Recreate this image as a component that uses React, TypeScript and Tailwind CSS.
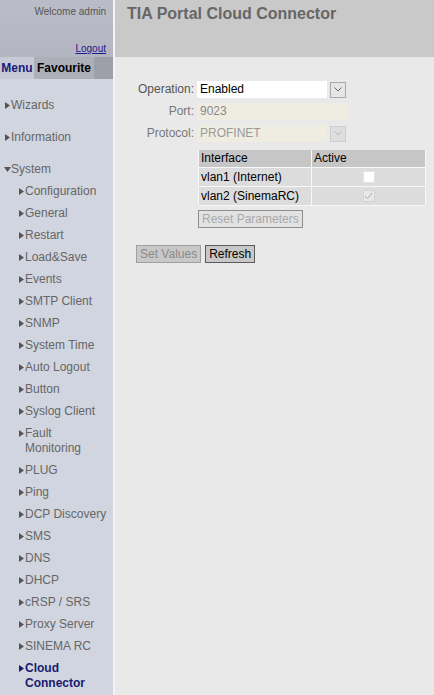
import React from "react";

const Tri = ({ down = false }: { down?: boolean }) => (
  <svg width="5" height="7" viewBox="0 0 5 7" className="inline-block mr-[1px] shrink-0" style={{ transform: down ? "rotate(90deg)" : undefined }}>
    <path d="M0 0 L5 3.5 L0 7 Z" fill="#555" />
  </svg>
);

const subItems: (string | [string, string])[] = [
  "Configuration",
  "General",
  "Restart",
  "Load&Save",
  "Events",
  "SMTP Client",
  "SNMP",
  "System Time",
  "Auto Logout",
  "Button",
  "Syslog Client",
  ["Fault", "Monitoring"],
  "PLUG",
  "Ping",
  "DCP Discovery",
  "SMS",
  "DNS",
  "DHCP",
  "cRSP / SRS",
  "Proxy Server",
  "SINEMA RC",
];

export default function App() {
  return (
    <div
      className="flex w-[434px] h-[695px] overflow-hidden text-[12px] leading-[15px]"
      style={{ fontFamily: '"Liberation Sans", Arial, sans-serif' }}
    >
      {/* Sidebar */}
      <div className="w-[113px] shrink-0 flex flex-col bg-[#d1d5df]">
        <div className="h-[57px] bg-gradient-to-b from-[#babdc7] to-[#b3b6c1] flex flex-col items-end pr-[7px] pt-[6px] text-[10px] leading-[12px] text-[#555]">
          <div>Welcome admin</div>
          <div className="mt-auto mb-[2px] text-[#1a1a8c] underline">Logout</div>
        </div>
        <div className="h-[22px] bg-[#9da0a9] flex text-[12px] font-bold">
          <div className="w-[34px] bg-[#c7cad4] text-[#1a1a7a] flex items-center justify-center">Menu</div>
          <div className="w-[60px] bg-[#adb0b8] text-black flex items-center justify-center">Favourite</div>
        </div>
        <div className="flex flex-col text-[#666] pt-[19px]">
          <div className="flex items-center pl-[5px] h-[15px]"><Tri />Wizards</div>
          <div className="flex items-center pl-[5px] h-[15px] mt-[17px]"><Tri />Information</div>
          <div className="flex items-center pl-[5px] h-[15px] mt-[17px]"><Tri down />System</div>
          {subItems.map((it, i) => (
            <div key={i} className="flex items-start pl-[19px] mt-[7px]">
              <span className="mt-[4px] mr-[1px]"><svg width="5" height="7" viewBox="0 0 5 7"><path d="M0 0 L5 3.5 L0 7 Z" fill="#555" /></svg></span>
              {Array.isArray(it) ? (
                <div className="flex flex-col">
                  <span>{it[0]}</span>
                  <span>{it[1]}</span>
                </div>
              ) : (
                <span className="whitespace-nowrap">{it}</span>
              )}
            </div>
          ))}
          <div className="flex items-start pl-[19px] mt-[7px] font-bold text-[#1a1a6e]">
            <span className="mt-[4px] mr-[1px]"><svg width="5" height="7" viewBox="0 0 5 7"><path d="M0 0 L5 3.5 L0 7 Z" fill="#1a1a6e" /></svg></span>
            <div className="flex flex-col">
              <span>Cloud</span>
              <span>Connector</span>
            </div>
          </div>
        </div>
      </div>
      <div className="w-[2px] shrink-0 bg-[#f4f4f4]" />
      {/* Content */}
      <div className="flex-1 flex flex-col bg-[#e9e9e9]">
        <div className="h-[57px] bg-[#c9c9c9] pl-[12px] pt-[5px] text-[16px] leading-[18px] font-bold text-[#666]">
          TIA Portal Cloud Connector
        </div>
        <div className="pl-[21px] pt-[24px]">
          <div className="flex items-center h-[17px]">
            <div className="w-[60px] text-right text-[#555] pr-[2px]">Operation:</div>
            <div className="ml-[1px] w-[130px] h-[17px] bg-white text-black pl-[3px] flex items-center">Enabled</div>
            <div className="ml-[3px] w-[16px] h-[16px] bg-[#e6e6e6] border border-[#a9a9a9] flex items-center justify-center">
              <svg width="8" height="5" viewBox="0 0 8 5"><path d="M0.5 0.5 L4 4 L7.5 0.5" stroke="#666" fill="none" strokeWidth="1" /></svg>
            </div>
          </div>
          <div className="flex items-center h-[17px] mt-[5px]">
            <div className="w-[60px] text-right text-[#777] pr-[2px]">Port:</div>
            <div className="ml-[1px] w-[151px] h-[17px] bg-[#efede2] text-[#888] pl-[3px] flex items-center">9023</div>
          </div>
          <div className="flex items-center h-[17px] mt-[5px]">
            <div className="w-[60px] text-right text-[#777] pr-[2px]">Protocol:</div>
            <div className="ml-[1px] w-[130px] h-[17px] bg-[#efede2] text-[#999] pl-[3px] flex items-center">PROFINET</div>
            <div className="ml-[3px] w-[16px] h-[16px] bg-[#dedede] border border-[#cfcfcf] flex items-center justify-center">
              <svg width="8" height="5" viewBox="0 0 8 5"><path d="M0.5 0.5 L4 4 L7.5 0.5" stroke="#b8b8b8" fill="none" strokeWidth="1" /></svg>
            </div>
          </div>
          <div className="ml-[62px] mt-[8px] w-[228px]">
            <div className="grid grid-cols-[112px_1fr] gap-[1px] bg-[#f7f7f7] p-[1px] pt-0">
              <div className="bg-[#c6c6c6] text-black pl-[2px] h-[17px] flex items-center">Interface</div>
              <div className="bg-[#c6c6c6] text-black pl-[2px] h-[17px] flex items-center">Active</div>
              <div className="bg-[#dcdcdc] text-black pl-[2px] h-[18px] flex items-center">vlan1 (Internet)</div>
              <div className="bg-[#dcdcdc] h-[18px] flex items-center justify-center">
                <div className="w-[12px] h-[12px] bg-white border border-[#e4e4e4]" />
              </div>
              <div className="bg-[#dcdcdc] text-black pl-[2px] h-[18px] flex items-center">vlan2 (SinemaRC)</div>
              <div className="bg-[#dcdcdc] h-[18px] flex items-center justify-center">
                <div className="w-[12px] h-[12px] bg-[#e8e8e8] border border-[#d4d4d4] flex items-center justify-center">
                  <svg width="9" height="8" viewBox="0 0 9 8"><path d="M1 4 L3.5 6.5 L8 1" stroke="#aaa" fill="none" strokeWidth="1" /></svg>
                </div>
              </div>
            </div>
          </div>
          <div className="ml-[62px] mt-[4px] inline-flex h-[18px] items-center px-[3px] border border-[#8e8e8e] bg-[#e2e2e2] text-[#a8a8a8]">
            Reset Parameters
          </div>
          <div className="flex mt-[17px] gap-[4px]">
            <div className="h-[18px] flex items-center px-[3px] border border-[#a0a0a0] bg-[#c8c8c8] text-[#8a8a8a]">Set Values</div>
            <div className="h-[18px] flex items-center px-[3px] border border-[#5a5a5a] bg-[#c8c8c8] text-black">Refresh</div>
          </div>
        </div>
      </div>
    </div>
  );
}
